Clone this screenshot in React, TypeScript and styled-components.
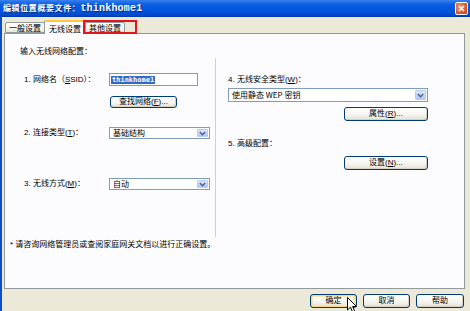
import React from 'react';
import styled, { createGlobalStyle } from 'styled-components';

const Global = createGlobalStyle`
  html, body { margin: 0; padding: 0; background: #ECE9D8; }
  body {
    font-family: "Liberation Sans", "Noto Sans CJK SC", sans-serif;
    font-size: 8px;
    color: #000;
  }
  #root { width: 470px; height: 311px; }
`;

const Window = styled.div`
  width: 470px;
  height: 311px;
  display: flex;
  flex-direction: column;
  background: #ECE9D8;
  overflow: hidden;
`;

const TitleBar = styled.div`
  height: 17px;
  flex: none;
  display: flex;
  align-items: center;
  justify-content: space-between;
  padding: 0 2px 0 3px;
  background: linear-gradient(#3A80EE 0%, #0B5FE2 25%, #0054DF 65%, #0048C8 90%, #0038A8 100%);
  color: #fff;
`;

const TitleText = styled.div`
  font-family: "Noto Sans CJK SC", sans-serif;
  font-weight: bold;
  font-size: 8px;
  letter-spacing: 0.6px;
  line-height: 10px;
  white-space: nowrap;
  text-shadow: 1px 1px 0 #0A2A7A;
`;

const TitleMono = styled.span`
  font-family: "Liberation Mono", monospace;
  font-weight: bold;
  font-size: 10px;
  letter-spacing: 0.2px;
`;

const CloseBtn = styled.div`
  width: 13px;
  height: 13px;
  box-sizing: border-box;
  border: 1px solid #fff;
  border-radius: 2px;
  background: radial-gradient(circle at 35% 35%, #F29A7A 0%, #E45A30 55%, #C33A14 100%);
  display: flex;
  align-items: center;
  justify-content: center;
`;

const Body = styled.div`
  flex: 1;
  display: flex;
  flex-direction: column;
  border-left: 2px solid #0A4FD0;
  padding: 0 5px 0 2px;
`;

const TabStrip = styled.div`
  position: relative;
  height: 16px;
  display: flex;
  align-items: flex-end;
  padding-left: 1px;
`;

const Tab = styled.div<{ $active?: boolean }>`
  box-sizing: border-box;
  height: ${p => (p.$active ? 14 : 11)}px;
  padding: 0 ${p => (p.$active ? 4 : 3)}px;
  margin: 0 ${p => (p.$active ? -1 : 0)}px ${p => (p.$active ? -1 : 0)}px;
  display: flex;
  align-items: center;
  font-family: "Noto Sans CJK SC", sans-serif;
  font-size: 8px;
  border: 1px solid #919B9C;
  border-bottom: ${p => (p.$active ? 'none' : '1px solid #919B9C')};
  border-top: ${p => (p.$active ? '2px solid #FFC73C' : '1px solid #919B9C')};
  border-radius: 2px 2px 0 0;
  background: ${p => (p.$active ? '#FCFCFE' : 'linear-gradient(#FFFFFF, #F3F1EA 70%, #E6E3D6)')};
  position: relative;
  z-index: ${p => (p.$active ? 2 : 1)};
`;

const RedMark = styled.div`
  position: absolute;
  left: 79px;
  top: 3px;
  width: 54px;
  height: 14px;
  box-sizing: border-box;
  border: 2px solid #E3161E;
  z-index: 3;
  pointer-events: none;
`;

const Panel = styled.div`
  box-sizing: border-box;
  height: 256px;
  border: 1px solid #919B9C;
  background: #FCFCFE;
  display: flex;
  flex-direction: column;
  padding: 13px 0 0 0;
  position: relative;
  z-index: 1;
  font-family: "Liberation Sans", "Noto Sans CJK SC", sans-serif;
`;

const Heading = styled.div`
  height: 10px;
  line-height: 10px;
  padding-left: 15px;
  margin-bottom: 1px;
  white-space: nowrap;
`;

const Columns = styled.div`
  display: grid;
  grid-template-columns: 210px 1px 1fr;
  height: 179px;
`;

const LeftCol = styled.div`
  display: flex;
  flex-direction: column;
  padding-left: 19px;
`;

const Divider = styled.div`
  background: #D4D0C8;
`;

const RightCol = styled.div`
  display: flex;
  flex-direction: column;
  padding-left: 12px;
  width: 200px;
`;

const Row = styled.div<{ $mt: number; $h: number }>`
  display: flex;
  align-items: center;
  margin-top: ${p => p.$mt}px;
  height: ${p => p.$h}px;
`;

const Label = styled.div`
  width: 85px;
  flex: none;
  white-space: nowrap;
  line-height: 10px;
`;

const LineLabel = styled.div<{ $mt: number }>`
  margin-top: ${p => p.$mt}px;
  line-height: 10px;
  height: 10px;
  white-space: nowrap;
`;

const U = styled.span`
  text-decoration: underline;
`;

const TextInput = styled.div`
  box-sizing: border-box;
  width: 89px;
  height: 13px;
  border: 1px solid #7F9DB9;
  background: #fff;
  display: flex;
  align-items: center;
  padding-left: 1px;
`;

const Selected = styled.span`
  background: #316AC5;
  color: #fff;
  font-family: "DejaVu Sans Mono", monospace;
  font-weight: bold;
  font-size: 7px;
  line-height: 8px;
  padding: 0 1px;
`;

const Select = styled.div<{ $w: number; $h: number; $mt?: number }>`
  box-sizing: border-box;
  width: ${p => p.$w}px;
  height: ${p => p.$h}px;
  margin-top: ${p => p.$mt ?? 0}px;
  border: 1px solid #7F9DB9;
  background: #fff;
  display: flex;
  align-items: center;
  justify-content: space-between;
  padding: 1px;
  font-family: "Noto Sans CJK SC", sans-serif;
`;

const SelectValue = styled.span`
  padding-left: 2px;
  line-height: 10px;
  white-space: nowrap;
`;

const DropBtn = styled.div`
  box-sizing: border-box;
  width: 11px;
  height: 100%;
  border: 1px solid #B9CBF3;
  border-radius: 1px;
  background: linear-gradient(#DCE6FD, #C1D3FB 60%, #B0C6F7);
  display: flex;
  align-items: center;
  justify-content: center;
`;

const Button = styled.div<{ $w: number; $h: number; $mt?: number; $ml?: number; $def?: boolean }>`
  box-sizing: border-box;
  width: ${p => p.$w}px;
  height: ${p => p.$h}px;
  margin-top: ${p => p.$mt ?? 0}px;
  margin-left: ${p => p.$ml ?? 0}px;
  flex: none;
  border: 1px solid #003C74;
  border-radius: 3px;
  background: linear-gradient(#FFFFFF, #F4F3EE 60%, #E3DFD2);
  box-shadow: ${p => (p.$def ? 'inset 0 0 0 1px #F8D783, inset 0 0 0 2px #FBE7A6' : 'inset -1px -1px 0 #D6D0C5')};
  display: flex;
  align-items: center;
  justify-content: center;
  line-height: 10px;
  white-space: nowrap;
  position: relative;
`;

const Note = styled.div`
  margin-top: 3px;
  padding-left: 5px;
  line-height: 10px;
  white-space: nowrap;
`;

const Footer = styled.div`
  display: flex;
  justify-content: flex-end;
  gap: 6px;
  padding: 5px 1px 0 0;
`;

const Cursor = styled.svg`
  position: absolute;
  left: 36px;
  top: 2px;
  z-index: 5;
`;

const Chevron = () => (
  <svg width="7" height="5" viewBox="0 0 7 5">
    <path d="M0.8 1 L3.5 3.7 L6.2 1" fill="none" stroke="#4D6185" strokeWidth="1.4" />
  </svg>
);

export default function App() {
  return (
    <>
      <Global />
      <Window>
        <TitleBar>
          <TitleText>
            编辑位置概要文件：<TitleMono>thinkhome1</TitleMono>
          </TitleText>
          <CloseBtn>
            <svg width="7" height="7" viewBox="0 0 7 7">
              <path d="M1 1 L6 6 M6 1 L1 6" stroke="#fff" strokeWidth="1.5" />
            </svg>
          </CloseBtn>
        </TitleBar>
        <Body>
          <TabStrip>
            <Tab>一般设置</Tab>
            <Tab $active>无线设置</Tab>
            <Tab>其他设置</Tab>
            <RedMark />
          </TabStrip>
          <Panel>
            <Heading>输入无线网络配置：</Heading>
            <Columns>
              <LeftCol>
                <Row $mt={15} $h={13}>
                  <Label>1. 网络名（<U>S</U>SID）：</Label>
                  <TextInput>
                    <Selected>thinkhome1</Selected>
                  </TextInput>
                </Row>
                <Button $w={67} $h={12} $mt={10} $ml={86}>
                  查找网络(<U>F</U>)...
                </Button>
                <Row $mt={19} $h={12}>
                  <Label>2. 连接类型(<U>T</U>)：</Label>
                  <Select $w={101} $h={12}>
                    <SelectValue>基础结构</SelectValue>
                    <DropBtn><Chevron /></DropBtn>
                  </Select>
                </Row>
                <Row $mt={39} $h={12}>
                  <Label>3. 无线方式(<U>M</U>)：</Label>
                  <Select $w={101} $h={12}>
                    <SelectValue>自动</SelectValue>
                    <DropBtn><Chevron /></DropBtn>
                  </Select>
                </Row>
              </LeftCol>
              <Divider />
              <RightCol>
                <LineLabel $mt={17}>4. 无线安全类型(<U>W</U>)：</LineLabel>
                <Select $w={200} $h={14} $mt={3}>
                  <SelectValue>使用静态 WEP 密钥</SelectValue>
                  <DropBtn><Chevron /></DropBtn>
                </Select>
                <Button $w={84} $h={14} $mt={5} $ml={116}>
                  属性(<U>R</U>)...
                </Button>
                <LineLabel $mt={18}>5. 高级配置：</LineLabel>
                <Button $w={84} $h={14} $mt={7} $ml={116}>
                  设置(<U>N</U>)...
                </Button>
              </RightCol>
            </Columns>
            <Note>* 请咨询网络管理员或查阅家庭网关文档以进行正确设置。</Note>
          </Panel>
          <Footer>
            <Button $w={47} $h={14} $def>
              确定
              <Cursor width="11" height="17" viewBox="0 0 11 17">
                <path d="M0.5 0.5 L0.5 13 L3.5 10.2 L5.8 15.5 L7.8 14.6 L5.6 9.5 L9.5 9.5 Z" fill="#fff" stroke="#000" strokeWidth="1" strokeLinejoin="round" />
              </Cursor>
            </Button>
            <Button $w={47} $h={14}>取消</Button>
            <Button $w={48} $h={14}>帮助</Button>
          </Footer>
        </Body>
      </Window>
    </>
  );
}
